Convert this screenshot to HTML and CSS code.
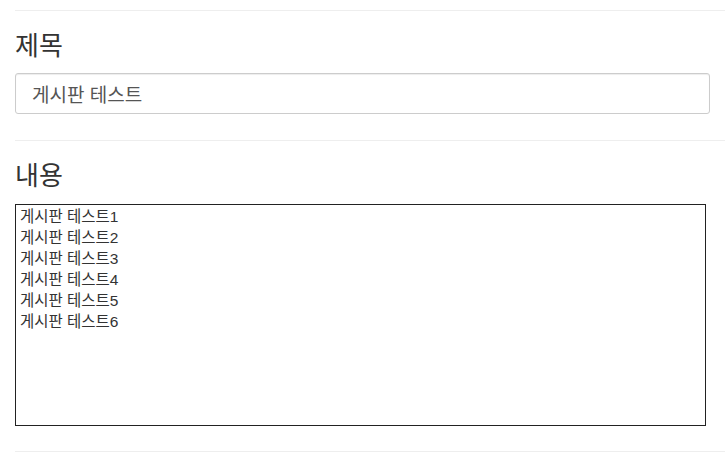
FILE: index.html
```html
<!DOCTYPE html>
<html lang="ko">
<head>
    <meta charset="UTF-8">
    <meta name="viewport" content="width=device-width, initial-scale=1.0">
    <title>게시판 글쓰기</title>
    <link rel="stylesheet" href="styles.css">
</head>
<body>
    <form class="write-form">
        <hr class="divider">
        <div class="form-group">
            <label class="form-label" for="title">제목</label>
            <input class="input-title" type="text" id="title" value="게시판 테스트">
        </div>
        <hr class="divider">
        <div class="form-group">
            <label class="form-label" for="content">내용</label>
            <textarea class="input-content" id="content" autofocus>게시판 테스트1
게시판 테스트2
게시판 테스트3
게시판 테스트4
게시판 테스트5
게시판 테스트6</textarea>
        </div>
        <hr class="divider">
    </form>
    <script>
        const content = document.getElementById('content');
        content.focus();
        content.setSelectionRange(content.value.length, content.value.length);
    </script>
</body>
</html>
```

FILE: styles.css
```css
body {
    margin: 0;
    font-family: "Liberation Sans", "Noto Sans CJK KR", sans-serif;
    color: #333;
    background-color: #fff;
    overflow: hidden;
}
.write-form {
    padding-left: 15px;
}
.divider {
    margin: 10px 0 0;
    border: 0;
    border-top: 1px solid #eee;
    height: 0;
}
.form-group {
    display: flex;
    flex-direction: column;
    align-items: flex-start;
    padding-top: 19px;
    padding-bottom: 25px;
}
.form-group + .divider {
    margin-top: 0;
}
.form-label {
    font-size: 26px;
    line-height: 33px;
    color: #333;
    margin-bottom: 10px;
}
.input-title {
    box-sizing: border-box;
    width: 695px;
    height: 41px;
    margin-bottom: 1px;
    padding: 0 16px;
    font-family: inherit;
    font-size: 19px;
    color: #555;
    border: 1px solid #ccc;
    border-radius: 3px;
    box-shadow: inset 0 1px 1px rgba(0, 0, 0, 0.075);
    outline: none;
}
.input-content {
    box-sizing: border-box;
    width: 691px;
    height: 222px;
    margin: 0;
    margin-top: 1px;
    padding: 1px 4px;
    font-family: inherit;
    font-size: 15.5px;
    line-height: 21px;
    color: #333;
    border: 1px solid #222;
    border-radius: 0;
    outline: none;
    resize: none;
    caret-color: #000;
}
```
